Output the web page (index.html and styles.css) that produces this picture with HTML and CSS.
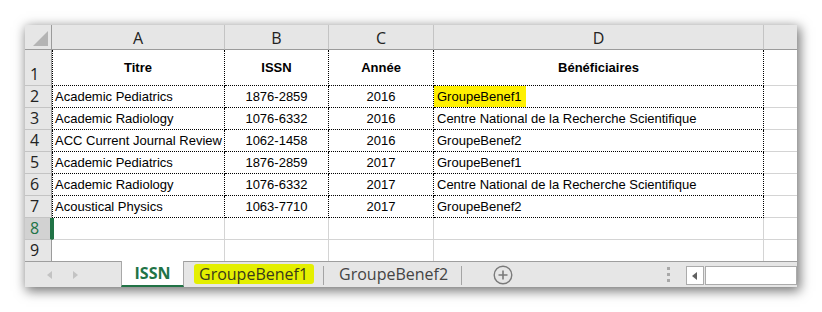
FILE: index.html
```html
<!DOCTYPE html>
<html lang="fr">
<head>
<meta charset="utf-8">
<title>Excel</title>
<link rel="stylesheet" href="styles.css">
</head>
<body>
<div class="window">
  <div class="sheet">
    <div class="corner"><span class="tri"></span></div>
    <div class="colhdr">A</div>
    <div class="colhdr">B</div>
    <div class="colhdr">C</div>
    <div class="colhdr">D</div>
    <div class="colhdr last"></div>

    <div class="rowhdr tall">1</div>
    <div class="c d first bold center">Titre</div>
    <div class="c d bold center">ISSN</div>
    <div class="c d bold center">Année</div>
    <div class="c d bold center">Bénéficiaires</div>
    <div class="c e"></div>

    <div class="rowhdr">2</div>
    <div class="c d first">Academic Pediatrics</div>
    <div class="c d center">1876-2859</div>
    <div class="c d center">2016</div>
    <div class="c d hl-cell"><span class="hl">GroupeBenef1</span></div>
    <div class="c e"></div>

    <div class="rowhdr">3</div>
    <div class="c d first">Academic Radiology</div>
    <div class="c d center">1076-6332</div>
    <div class="c d center">2016</div>
    <div class="c d">Centre National de la Recherche Scientifique</div>
    <div class="c e"></div>

    <div class="rowhdr">4</div>
    <div class="c d first">ACC Current Journal Review</div>
    <div class="c d center">1062-1458</div>
    <div class="c d center">2016</div>
    <div class="c d">GroupeBenef2</div>
    <div class="c e"></div>

    <div class="rowhdr">5</div>
    <div class="c d first">Academic Pediatrics</div>
    <div class="c d center">1876-2859</div>
    <div class="c d center">2017</div>
    <div class="c d">GroupeBenef1</div>
    <div class="c e"></div>

    <div class="rowhdr">6</div>
    <div class="c d first">Academic Radiology</div>
    <div class="c d center">1076-6332</div>
    <div class="c d center">2017</div>
    <div class="c d">Centre National de la Recherche Scientifique</div>
    <div class="c e"></div>

    <div class="rowhdr">7</div>
    <div class="c d first">Acoustical Physics</div>
    <div class="c d center">1063-7710</div>
    <div class="c d center">2017</div>
    <div class="c d">GroupeBenef2</div>
    <div class="c e"></div>

    <div class="rowhdr sel">8</div>
    <div class="c active"></div>
    <div class="c"></div>
    <div class="c"></div>
    <div class="c"></div>
    <div class="c e"></div>

    <div class="rowhdr nob">9</div>
    <div class="c nob"></div>
    <div class="c nob"></div>
    <div class="c nob"></div>
    <div class="c nob"></div>
    <div class="c e nob"></div>
  </div>

  <div class="tabbar">
    <div class="nav">
      <span class="arrow left"></span>
      <span class="arrow right"></span>
    </div>
    <div class="tab current">ISSN</div>
    <div class="tab t1"><span class="mark">GroupeBenef1</span></div>
    <div class="sep"></div>
    <div class="tab t2">GroupeBenef2</div>
    <div class="sep"></div>
    <div class="add">
      <svg width="20" height="20" viewBox="0 0 20 20">
        <circle cx="10" cy="10" r="8.8" fill="none" stroke="#7a7a7a" stroke-width="1.4"/>
        <path d="M10 5.5v9M5.5 10h9" stroke="#7a7a7a" stroke-width="1.6"/>
      </svg>
    </div>
    <div class="dots"><span></span><span></span><span></span></div>
    <div class="hscroll">
      <div class="sbtn"><span class="sarrow"></span></div>
      <div class="strack"></div>
    </div>
  </div>
</div>
</body>
</html>
```
FILE: styles.css
```css
* { box-sizing: border-box; }
html, body {
  margin: 0;
  padding: 0;
  background: #ffffff;
}
body {
  padding: 25px 0 0 25px;
  width: 822px;
  height: 312px;
  overflow: hidden;
}
.window {
  width: 772px;
  height: 262px;
  background: #ffffff;
  box-shadow: 2px 3px 11px 1px rgba(0, 0, 0, 0.55);
  overflow: hidden;
}
.sheet {
  display: grid;
  grid-template-columns: 27px 173px 104px 105px 330px 33px;
  grid-template-rows: 25px 36px repeat(7, 22px) 21px;
  font-family: "Liberation Sans", Arial, sans-serif;
  font-size: 13px;
  color: #000;
}
.corner {
  background: #e6e6e6;
  border-right: 1px solid #9b9b9b;
  border-bottom: 1px solid #9b9b9b;
  position: relative;
}
.corner .tri {
  position: absolute;
  right: 3px;
  bottom: 3px;
  width: 0;
  height: 0;
  border-left: 15px solid transparent;
  border-bottom: 15px solid #b4b4b4;
}
.colhdr {
  background: #e6e6e6;
  border-bottom: 1px solid #9b9b9b;
  border-right: 1px solid #c4c4c4;
  font-family: "Open Sans", "Noto Sans", sans-serif;
  font-size: 16px;
  color: #222;
  display: flex;
  align-items: center;
  justify-content: center;
  line-height: 1;
  padding-top: 1px;
}
.colhdr.last { border-right: none; }
.rowhdr {
  background: #e6e6e6;
  border-right: 1px solid #9b9b9b;
  border-bottom: 1px solid #c4c4c4;
  font-family: "Open Sans", "Noto Sans", sans-serif;
  font-size: 16px;
  color: #222;
  display: flex;
  align-items: flex-end;
  padding: 0 0 1px 5px;
  line-height: 20px;
}
.rowhdr.sel {
  background: #d2d2d2;
  color: #217346;
  border-right: 2px solid #217346;
}
.rowhdr.nob, .c.nob { border-bottom: none; }
.c {
  border-right: 1px solid #d4d4d4;
  border-bottom: 1px solid #d4d4d4;
  display: flex;
  align-items: center;
  padding: 0 3px;
  white-space: nowrap;
  overflow: hidden;
}
.c.e { border-right: none; }
.c.d {
  border-right: 1px dotted #000;
  border-bottom: 1px dotted #000;
}
.c.first { border-left: 1px dotted #000; padding-left: 2px; }
.c.active { border-left: 2px solid #217346; }
.bold { font-weight: bold; }
.center { justify-content: center; }
.hl-cell { padding-left: 0; align-items: stretch; }
.hl {
  background: #fff000;
  display: flex;
  align-items: center;
  padding: 0 4px 0 3px;
}

.tabbar {
  height: 26px;
  border-top: 1px solid #9e9e9e;
  background: #e6e6e6;
  display: flex;
  align-items: stretch;
  font-family: "Open Sans", "Noto Sans", sans-serif;
  font-size: 16px;
  color: #444;
}
.nav {
  width: 96px;
  display: flex;
  align-items: center;
  padding-left: 22px;
  gap: 21px;
}
.arrow {
  width: 0;
  height: 0;
  border-top: 4.5px solid transparent;
  border-bottom: 4.5px solid transparent;
}
.arrow.left { border-right: 5px solid #c3c3c3; }
.arrow.right { border-left: 5px solid #c3c3c3; }
.tab {
  display: flex;
  align-items: center;
  padding: 0 0 2px 0;
  line-height: 20px;
}
.tab.t1 { padding-left: 10px; padding-right: 9px; }
.tab.t2 { padding-left: 15px; padding-right: 13px; }
.tab.current {
  background: #ffffff;
  border-left: 1px solid #a8a8a8;
  border-right: 1px solid #a8a8a8;
  border-bottom: 2px solid #217346;
  color: #217346;
  font-weight: bold;
  width: 63px;
  justify-content: center;
  padding: 0 0 1px 0;
  margin-top: -1px;
}
.mark {
  background: #e4ef00;
  border-radius: 3px;
  padding: 0 6px 0 5px;
  color: #3a3a1a;
}
.sep {
  width: 1px;
  background: #a4a4a4;
  margin: 4px 0 2px 0;
}
.add {
  display: flex;
  align-items: center;
  margin-left: 31px;
  padding-top: 1px;
}
.dots {
  margin-left: auto;
  width: 4px;
  display: flex;
  flex-direction: column;
  justify-content: center;
  gap: 3px;
  margin-right: 15px;
}
.dots span {
  width: 3px;
  height: 3px;
  background: #a8a8a8;
}
.hscroll {
  display: flex;
  width: 111px;
  height: 19px;
  margin-top: 4px;
}
.sbtn {
  width: 18px;
  background: #ffffff;
  border: 1px solid #ababab;
  display: flex;
  align-items: center;
  justify-content: center;
}
.sarrow {
  width: 0;
  height: 0;
  border-top: 4px solid transparent;
  border-bottom: 4px solid transparent;
  border-right: 5px solid #616161;
  margin-left: -2px;
}
.strack {
  flex: 1;
  background: #ffffff;
  border: 1px solid #ababab;
  margin-left: 1px;
}
```
